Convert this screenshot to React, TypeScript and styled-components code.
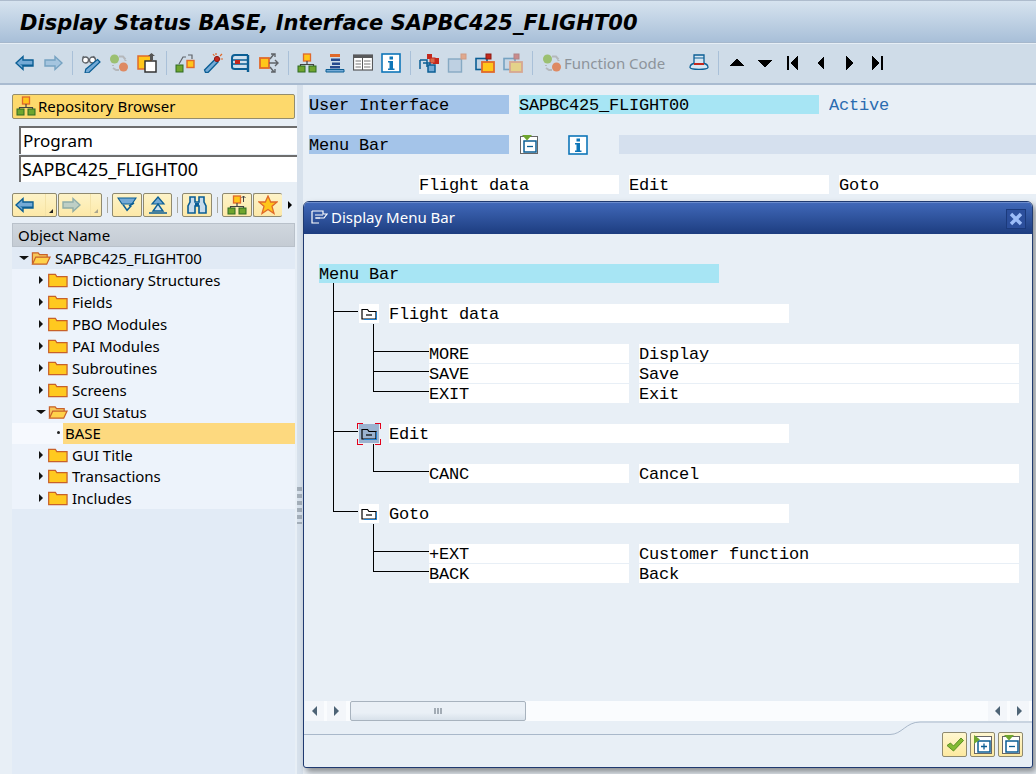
import React from 'react'
import styled, { createGlobalStyle } from 'styled-components'

const GlobalStyle = createGlobalStyle`
    html, body {
        margin: 0;
        padding: 0;
        background: #e8eff6;
    }
    * { box-sizing: border-box; }
`

const UI = `"Noto Sans", "DejaVu Sans", sans-serif`
const MONO = `"Liberation Mono", "DejaVu Sans Mono", monospace`

/* ---- icons ---- */
const BLUE = '#0b5e94'
const SKY = '#74aad6'
const GREEN = '#6fa52e'
const ORANGE = '#e0692a'
const YELLOW = '#ffc61a'
const RED = '#c4281c'
const GREY = '#5f6368'

type IconProps = { children: React.ReactNode; size?: number; box?: number; faded?: boolean }
const Svg = ({ children, size = 20, box = 20, faded }: IconProps) => (
    <svg width={size} height={size} viewBox={`0 0 ${box} ${box}`} style={faded ? { opacity: 0.45 } : undefined}>
        {children}
    </svg>
)

const ArrowLeft = ({ faded, size }: { faded?: boolean; size?: number }) => (
    <Svg faded={faded} size={size}>
        <path d="M1 10 8 3.5V7h10v6H8v3.5z" fill={SKY} stroke={BLUE} strokeWidth="1.4" />
        <path d="M8 13h10v-1.600H5z" fill={BLUE} />
    </Svg>
)
const ArrowRight = ({ faded, size }: { faded?: boolean; size?: number }) => (
    <Svg faded={faded} size={size}>
        <path d="M19 10 12 3.5V7H2v6h10v3.5z" fill={SKY} stroke={BLUE} strokeWidth="1.4" />
    </Svg>
)
const GlassesPencil = () => (
    <Svg>
        <circle cx="4.500" cy="7" r="3" fill="#fff" stroke={GREY} strokeWidth="1.300" />
        <circle cx="11.500" cy="7" r="3" fill="#fff" stroke={GREY} strokeWidth="1.300" />
        <path d="M7.500 6.500h1M2.500 3l-1 2.500M12.500 3l1.500 2.500" stroke={GREY} strokeWidth="1.100" fill="none" />
        <path d="m16.500 6.500 2.500 2.500L8 19.500 4 20l.8-3.800z" fill={SKY} stroke={BLUE} strokeWidth="1.200" />
    </Svg>
)
const Cycle = ({ faded }: { faded?: boolean }) => (
    <Svg faded={faded}>
        <path d="M10 3.500h4l2.500 3M10 17h-3l-3-2" stroke="#b5b8bb" strokeWidth="2" fill="none" />
        <path d="M4 13v-1M16.500 7v1" stroke="#b5b8bb" strokeWidth="2" />
        <circle cx="5.500" cy="6" r="4.500" fill="#9cc071" />
        <circle cx="14.500" cy="14" r="4.500" fill="#de8a63" />
    </Svg>
)
const CopyDoc = () => (
    <Svg>
        <rect x="1" y="3" width="13" height="13" fill={YELLOW} stroke={ORANGE} strokeWidth="1.500" />
        <path d="M8 8h11v11H8z" fill="#fff" stroke="#333" strokeWidth="1.500" />
        <path d="M13 1h3v6h-3zM14.500 0l3.500 3h-7z" fill="#555" />
    </Svg>
)
const ActivateNodes = () => (
    <Svg>
        <rect x="1" y="12" width="7" height="7" fill={GREEN} stroke="#2f6b22" />
        <rect x="12" y="7.500" width="7" height="7" fill={YELLOW} stroke={ORANGE} strokeWidth="1.400" />
        <path d="M4 11 8 4h3M13 2h4v4" stroke={GREY} strokeWidth="1.200" fill="none" />
    </Svg>
)
const Wand = () => (
    <Svg>
        <path d="M12 6.500 15 9 5 19.500H2.500L1.500 17z" fill={SKY} stroke={BLUE} strokeWidth="1.300" />
        <circle cx="14" cy="6" r="2.600" fill={RED} stroke="#8d1a12" />
        <path d="M13 0v2M19 1l-2 2M20 6h-2.500M10 1l1.500 2" stroke={ORANGE} strokeWidth="1.200" />
    </Svg>
)
const Clamp = () => (
    <Svg>
        <path d="M17 2H4C2 2 1 3 1 5v9c0 1.500 1 2 3 2h13" fill="#cfe0ee" stroke={BLUE} strokeWidth="2" />
        <path d="M1 7h16M1 11h16" stroke={BLUE} strokeWidth="1.300" />
        <rect x="4" y="7" width="5" height="4" fill={RED} />
        <path d="M17 2v17" stroke={BLUE} strokeWidth="2.400" />
    </Svg>
)
const Branch = () => (
    <Svg>
        <rect x="1" y="5" width="9" height="10" fill={YELLOW} stroke={ORANGE} strokeWidth="1.800" />
        <path d="M10 10h9M16 7l3 3-3 3M11 6l4-5M12 1h4v3M11 14l4 5M12 19h4v-3" stroke={GREY} strokeWidth="1.400" fill="none" />
    </Svg>
)
const Hierarchy = ({ size, spark }: { size?: number; spark?: boolean }) => (
    <Svg size={size}>
        <rect x="6.500" y="1" width="7" height="7" fill={YELLOW} stroke={ORANGE} strokeWidth="1.300" />
        <path d="M10 8v3.500M3.500 14v-2.500h13V14" stroke="#444" strokeWidth="1.200" fill="none" />
        <rect x="1" y="13" width="7" height="6" fill={GREEN} stroke="#2f6b22" />
        <rect x="12" y="13" width="7" height="6" fill={GREEN} stroke="#2f6b22" />
        {spark && <path d="M16.500 1v6M14.500 3l2-2 2 2" stroke="#444" fill="none" />}
    </Svg>
)
const Stack = () => (
    <Svg>
        <rect x="5" y="1" width="10" height="3" fill={ORANGE} />
        <rect x="6" y="5.500" width="9" height="2.500" fill="#274a8e" />
        <rect x="7" y="9.500" width="8" height="2.500" fill="#274a8e" />
        <rect x="5" y="13" width="10" height="2.500" fill="#274a8e" />
        <path d="M1 19h18v-2.500H1z" fill={SKY} stroke={BLUE} />
    </Svg>
)
const TableView = () => (
    <Svg>
        <rect x="0.500" y="2" width="19" height="15" fill="#fff" stroke="#58595b" strokeWidth="1.200" />
        <rect x="0.500" y="2" width="19" height="3" fill="#58595b" />
        <path d="M2.500 8H8M2.500 11H8M2.500 14H8M11 8h6.500M11 11h6.500M11 14h6.500" stroke="#777" strokeWidth="1.200" />
        <path d="M9.500 5v12" stroke="#58595b" />
    </Svg>
)
const Info = ({ size }: { size?: number }) => (
    <Svg size={size}>
        <rect x="1" y="1" width="18" height="18" fill="#fff" stroke="#0e76b8" strokeWidth="1.600" />
        <rect x="8.500" y="3.500" width="3.500" height="3" fill="#0e76b8" />
        <path d="M7 8h5v7.500h1.500V17H7v-1.500h1.500V9.500H7z" fill="#0e76b8" />
    </Svg>
)
const Windows = () => (
    <Svg>
        <rect x="8" y="1" width="5" height="5" fill={RED} />
        <rect x="14" y="5" width="6" height="6" fill={RED} />
        <rect x="11" y="5" width="5" height="5" fill="#d86a4a" stroke={RED} />
        <path d="M1 7h7v7M1 7v9" stroke={BLUE} strokeWidth="1.500" fill="none" />
        <path d="M4 10h7v3" stroke={BLUE} strokeWidth="1.500" fill="none" />
        <rect x="9" y="12" width="7" height="7" fill={SKY} stroke={BLUE} strokeWidth="1.500" />
    </Svg>
)
const NewWindowFaded = () => (
    <Svg>
        <rect x="1.500" y="6" width="13" height="13" fill="#bed0e2" stroke="#86a9c3" strokeWidth="1.400" />
        <rect x="14" y="1" width="5" height="5" fill="#e0a98e" stroke="#d09b84" />
    </Svg>
)
const FolderWindow = ({ faded }: { faded?: boolean }) => (
    <Svg faded={faded}>
        <rect x="1" y="5.500" width="11" height="11" fill="#c2d3e3" stroke={BLUE} strokeWidth="1.600" />
        <rect x="11" y="1" width="5" height="5" fill={RED} stroke="#8d1a12" />
        <rect x="7" y="9" width="12" height="10" fill={YELLOW} stroke={ORANGE} strokeWidth="1.800" />
    </Svg>
)
const Hat = () => (
    <Svg>
        <path d="M5 2h10v9H5z" fill="#d6e6f3" stroke={BLUE} strokeWidth="1.300" />
        <path d="M5 5h10" stroke={BLUE} />
        <path d="M5 10.500C2 11 1 12.500 1 14.500c1 2.500 17 2.500 18 0 0-2-1-3.500-4-4" fill="#d6e6f3" stroke={BLUE} strokeWidth="1.300" />
        <rect x="5" y="10" width="10" height="2" fill={RED} />
    </Svg>
)
const Solid = ({ d, w = 16 }: { d: string; w?: number }) => (
    <svg width={w} height="16" viewBox="0 0 16 16" shapeRendering="crispEdges">
        <path d={d} fill="#000" />
    </svg>
)
const Binoculars = () => (
    <Svg>
        <path d="M3 2h5v5h4V2h5v5l2 4v7h-7v-7H8v7H1v-7l2-4z" fill="#c8dcec" stroke={BLUE} strokeWidth="1.600" />
        <path d="M8 8h4v3H8z" fill={BLUE} />
    </Svg>
)
const CollapseAll = () => (
    <Svg>
        <path d="M1 3h18l-4 6H5z" fill={SKY} stroke={BLUE} strokeWidth="1.200" />
        <path d="M5 9.500l5 7 5-5.500-1.500-.5-3.500 3.500-3-4.500z" fill={BLUE} />
        <path d="M12 11l5-3" stroke={BLUE} strokeWidth="1.500" />
    </Svg>
)
const ExpandAll = () => (
    <Svg>
        <path d="M10 2 16 9H4z" fill={SKY} stroke={BLUE} strokeWidth="1.200" />
        <path d="M10 9l5 7H5zM1 18h18" fill="#cfe2f0" stroke={BLUE} strokeWidth="1.400" />
    </Svg>
)
const Star = () => (
    <Svg>
        <path d="M10 1l2.700 6H19l-5 4.300 2 7.200-6-4-6 4 2-7.200L1 7h6.300z" fill={YELLOW} stroke={ORANGE} strokeWidth="1.300" />
    </Svg>
)
const Check = () => (
    <Svg>
        <path d="M2 10.500 5.500 8l3 3L16 3l2.500 2.500L8.500 16z" fill="#83bb32" stroke="#5a8f22" />
    </Svg>
)
const Expand = ({ plus }: { plus?: boolean }) => (
    <Svg>
        <rect x="1.500" y="1.500" width="17" height="17" fill="#fff" stroke="#666" />
        <rect x="5" y="6" width="12" height="11" fill="#fff" stroke={BLUE} strokeWidth="1.500" />
        <path d={plus ? 'M8 11.500h6M11 8.500v6' : 'M8 11.500h6'} stroke={BLUE} strokeWidth="1.300" />
        {plus
            ? <path d="M1 0v9l6-4.500z" fill={GREEN} />
            : <path d="M3 0h10L8 5.500z" fill={GREEN} />}
    </Svg>
)
const Folder = ({ open }: { open?: boolean }) => (
    <svg width="20" height="16" viewBox="0 0 21 16">
        {open ? (
            <>
                <path d="M1.500 14V2.500h6l1.500 2h8v2.500" fill="#f7c95a" stroke="#c8612a" strokeWidth="1.300" />
                <path d="M1.500 14.500 5 7h15l-3.500 7.500z" fill="#ffd24a" stroke="#c8612a" strokeWidth="1.300" />
            </>
        ) : (
            <path d="M.7 15V2h7l1.500 2.500h10.800V15z" fill="#ffc91f" stroke="#c8612a" strokeWidth="1.300" />
        )}
    </svg>
)
const SmallFolder = () => (
    <svg width="16" height="12" viewBox="0 0 16 12">
        <path d="M1 11V1.500h5.500L8 3.500h7V11z" fill="none" stroke="#000" strokeWidth="1.200" />
        <path d="M5 7h6" stroke="#000" strokeWidth="1.200" />
        <path d="M15.500 4v7.500H3" stroke="#1f7fd0" fill="none" />
    </svg>
)
const DialogGlyph = () => (
    <svg width="17" height="14" viewBox="0 0 17 14">
        <path d="M1 1h11v3l4 0-3 4H5M1 1v12h7" fill="none" stroke="#fff" strokeWidth="1.200" />
        <path d="M4 5h8M4 8h5" stroke="#fff" />
    </svg>
)

/* ---- page frame ---- */
const Page = styled.div`
    width: 1036px;
    height: 774px;
    position: relative;
    overflow: hidden;
    display: flex;
    flex-direction: column;
    background: #e8eff6;
    font-family: ${UI};
    color: #000;
`

const TitleBar = styled.header`
    height: 43px;
    flex: none;
    padding: 8px 0 0 20px;
    background: linear-gradient(#d6e3ef, #a8bfd8);
    border-top: 1px solid #aebccd;
    border-bottom: 1px solid #a6b8cc;
    font-family: "DejaVu Sans", sans-serif;
    font-size: 21px;
    line-height: 28px;
    font-weight: bold;
    font-style: italic;
    letter-spacing: 0.03px;
    white-space: nowrap;
`

const Toolbar = styled.nav`
    height: 42px;
    flex: none;
    display: flex;
    align-items: center;
    padding: 0 0 1px 11px;
    background: #cfdce8;
    border-top: 1px solid #e6eef5;
    border-bottom: 2px solid #a9bbd0;
`

const ToolIcon = styled.span`
    width: 28px;
    height: 24px;
    flex: none;
    display: flex;
    align-items: center;
    justify-content: center;
`

const ToolSep = styled.span`
    width: 10px;
    height: 24px;
    flex: none;
    display: flex;
    justify-content: center;
    &::before {
        content: '';
        width: 1px;
        background: #a9c0d8;
    }
`

const FunctionButton = styled.span`
    width: 148px;
    flex: none;
    display: flex;
    align-items: center;
    gap: 2px;
    padding-left: 5px;
    font-size: 15px;
    color: #8d949b;
    white-space: nowrap;
`

const Main = styled.div`
    flex: 1;
    display: flex;
    min-height: 0;
`

/* ---- left panel ---- */
const Side = styled.aside`
    width: 297px;
    flex: none;
    display: flex;
    flex-direction: column;
    padding: 9px 2px 0 12px;
    overflow: hidden;
`

const RepoButton = styled.div`
    height: 25px;
    display: flex;
    align-items: center;
    gap: 2px;
    padding: 0 0 1px 3px;
    background: #fdd96c;
    border: 1px solid #948d6c;
    border-radius: 2px;
    font-size: 15px;
`

const SideField = styled.div<{ $gap: number; $height: number; $size: number; $pad: number }>`
    height: ${(p) => p.$height}px;
    margin: ${(p) => p.$gap}px -2px 0 7px;
    padding: 0 0 2px ${(p) => p.$pad}px;
    display: flex;
    align-items: center;
    background: #fff;
    border-top: 2px solid #6d6d6d;
    border-left: 2px solid #6d6d6d;
    font-size: ${(p) => p.$size}px;
`

const SideTools = styled.div`
    height: 24px;
    margin-top: 11px;
    display: flex;
    align-items: stretch;
    white-space: nowrap;
`

const SideBtn = styled.span<{ $w: number; $open?: boolean }>`
    width: ${(p) => p.$w}px;
    flex: none;
    margin-right: 1px;
    position: relative;
    display: flex;
    align-items: center;
    justify-content: ${(p) => (p.$w > 35 ? 'flex-start' : 'center')};
    padding-left: ${(p) => (p.$w > 35 ? '2px' : '0')};
    background: linear-gradient(#fdf3c8, #fde9a8);
    border: 1px solid #8f8a70;
    border-right-width: ${(p) => (p.$open ? 0 : 1)}px;
    border-radius: 2px;
`

const SideDrop = styled.i<{ $dim?: boolean }>`
    position: absolute;
    right: 3px;
    bottom: 3px;
    width: 0;
    height: 0;
    border-left: 4px solid transparent;
    border-bottom: 4px solid ${(p) => (p.$dim ? '#a9a58f' : '#222')};
`

const SideSplit = styled.i`
    position: absolute;
    right: 10px;
    top: 0;
    bottom: 0;
    width: 1px;
    background: #f4e3a8;
`

const SideSep = styled.span`
    width: 9px;
    flex: none;
    display: flex;
    justify-content: center;
    padding: 4px 0;
    &::before {
        content: '';
        width: 1px;
        background: #a9a9a0;
    }
`

const MoreArrow = styled.span`
    margin-left: 5px;
    align-self: center;
    width: 0;
    height: 0;
    border-left: 4px solid #000;
    border-top: 4px solid transparent;
    border-bottom: 4px solid transparent;
`

const TreeHead = styled.div`
    height: 24px;
    margin-top: 6px;
    padding: 0 0 1px 5px;
    display: flex;
    align-items: center;
    background: linear-gradient(#d0d7de, #c5ccd4);
    border: 1px solid #b9c1ca;
    font-size: 15px;
`

const Tree = styled.div`
    flex: 1;
    background: #e2ebf6;
`

const TreeItem = styled.div<{ $depth: number; $root?: boolean; $picked?: boolean; $short?: boolean }>`
    height: ${(p) => (p.$picked || p.$short ? 21 : 22)}px;
    display: flex;
    align-items: center;
    gap: 4px;
    padding-left: ${(p) => 7 + p.$depth * 17}px;
    background: ${(p) => (p.$root ? '#e1eaf5' : p.$picked ? '#f6f9fe' : '#edf3fb')};
    font-size: 15px;
    white-space: nowrap;
`

const TreeArrow = styled.span<{ $down?: boolean }>`
    width: 9px;
    height: 9px;
    flex: none;
    margin-right: -1px;
    display: flex;
    align-items: center;
    justify-content: center;
    &::before {
        content: '';
        width: 0;
        height: 0;
        ${(p) =>
            p.$down
                ? `border-top: 4px solid #111; border-left: 5px solid transparent; border-right: 5px solid transparent;`
                : `border-left: 4px solid #111; border-top: 4px solid transparent; border-bottom: 4px solid transparent;`}
    }
`

const PickedLabel = styled.span`
    flex: 1;
    align-self: stretch;
    margin-left: -1px;
    padding: 0 0 2px 2px;
    display: flex;
    align-items: center;
    background: #fdd97f;
`

const Bullet = styled.span`
    width: 3px;
    height: 3px;
    margin: 0 0 2px 21px;
    background: #222;
    border-radius: 50%;
`

const Sash = styled.div`
    width: 6px;
    flex: none;
    display: flex;
    align-items: center;
    background: #d7e1ec;
    padding-top: 152px;
    &::before {
        content: '';
        width: 5px;
        height: 37px;
        background: repeating-linear-gradient(#a3aeb9 0 4px, transparent 4px 7px);
    }
`

/* ---- right screen ---- */
const Screen = styled.section`
    flex: 1;
    padding: 10px 0 0 6px;
    font-family: ${MONO};
    overflow: hidden;
`

const ScreenRow = styled.div<{ $indent?: number }>`
    height: 19px;
    margin-bottom: 21px;
    padding-left: ${(p) => p.$indent ?? 0}px;
    display: flex;
    align-items: stretch;
`

const Cell = styled.div<{ $w?: number; $bg?: string; $gap?: number; $color?: string }>`
    ${(p) => (p.$w ? `width: ${p.$w}px; flex: none;` : 'flex: 1;')}
    margin-left: ${(p) => p.$gap ?? 0}px;
    background: ${(p) => p.$bg ?? 'transparent'};
    color: ${(p) => p.$color ?? '#000'};
    font-size: 17px;
    line-height: 21px;
    letter-spacing: -0.2px;
    white-space: nowrap;
    overflow: hidden;
`

const CellIcon = styled.span<{ $w: number }>`
    width: ${(p) => p.$w}px;
    flex: none;
    display: flex;
    align-items: center;
    justify-content: center;
`

/* ---- dialog ---- */
const Dialog = styled.div`
    position: absolute;
    left: 303px;
    top: 201px;
    width: 730px;
    height: 567px;
    display: flex;
    flex-direction: column;
    background: #e8eff6;
    border: 1px solid #1f3a70;
    border-radius: 6px 6px 3px 3px;
    box-shadow: 3px 4px 6px rgba(60, 60, 60, 0.55);
    overflow: hidden;
    font-family: ${MONO};
`

const DialogTitle = styled.div`
    height: 32px;
    flex: none;
    display: flex;
    align-items: center;
    gap: 3px;
    padding: 0 0 3px 7px;
    background: linear-gradient(#4068b8, #1d3d80);
    border-top: 1px solid #6c8ccc;
    color: #fff;
    font-family: ${UI};
    font-size: 15px;
`

const CloseBtn = styled.span`
    margin: 3px 6px 0 auto;
    width: 20px;
    height: 20px;
    display: flex;
    align-items: center;
    justify-content: center;
    background: #2c4f9c;
    border: 1px solid #1b3a7c;
`

const MenuTree = styled.div`
    position: relative;
    flex: 1;
    padding: 30px 0 0 15px;
`

const TreeLines = styled.svg`
    position: absolute;
    left: 0;
    top: 0;
    width: 100%;
    height: 100%;
    pointer-events: none;
`

const DRow = styled.div<{ $top?: number; $indent: number }>`
    height: 20px;
    margin-top: ${(p) => p.$top ?? 0}px;
    padding-left: ${(p) => p.$indent}px;
    padding-bottom: 1px;
    display: flex;
    align-items: stretch;
`

const FolderBox = styled.span<{ $picked?: boolean }>`
    position: relative;
    width: 20px;
    flex: none;
    margin-right: 10px;
    display: flex;
    align-items: center;
    justify-content: center;
    background: ${(p) => (p.$picked ? '#9bb3d0' : '#fff')};
    ${(p) =>
        p.$picked &&
        `&::after {
            content: '';
            position: absolute;
            inset: -1px -2px -2px -2px;
            background:
                linear-gradient(#e2001a,#e2001a) 0 0/6px 1px no-repeat,
                linear-gradient(#e2001a,#e2001a) 0 0/1px 6px no-repeat,
                linear-gradient(#e2001a,#e2001a) 100% 0/6px 1px no-repeat,
                linear-gradient(#e2001a,#e2001a) 100% 0/1px 6px no-repeat,
                linear-gradient(#e2001a,#e2001a) 0 100%/6px 1px no-repeat,
                linear-gradient(#e2001a,#e2001a) 0 100%/1px 6px no-repeat,
                linear-gradient(#e2001a,#e2001a) 100% 100%/6px 1px no-repeat,
                linear-gradient(#e2001a,#e2001a) 100% 100%/1px 6px no-repeat;
        }`}
`

const ScrollBar = styled.div`
    height: 20px;
    flex: none;
    margin-left: 1px;
    display: flex;
    align-items: stretch;
    background: #fafcfe;
`

const ScrollArrow = styled.span<{ $dir: 'l' | 'r'; $push?: boolean }>`
    width: 19px;
    margin-right: 3px;
    ${(p) => p.$push && 'margin-left: auto;'}
    display: flex;
    align-items: center;
    justify-content: center;
    background: #f3f6fa;
    &::before {
        content: '';
        width: 0;
        height: 0;
        border-top: 5px solid transparent;
        border-bottom: 5px solid transparent;
        ${(p) => (p.$dir === 'l' ? 'border-right: 5px solid #4d6375;' : 'border-left: 5px solid #4d6375;')}
    }
`

const ScrollThumb = styled.span`
    width: 176px;
    margin-left: 1px;
    display: flex;
    align-items: center;
    justify-content: center;
    background: linear-gradient(#eaf0f6 60%, #d8e1ea);
    border: 1px solid #a8b3be;
    border-radius: 2px;
    color: #a3acb5;
    &::before {
        content: '';
        width: 8px;
        height: 6px;
        background: repeating-linear-gradient(90deg, #a3acb5 0 2px, transparent 2px 3px);
    }
`

const Footer = styled.div`
    position: relative;
    height: 46px;
    flex: none;
    padding: 11px 9px 0 0;
    display: flex;
    justify-content: flex-end;
    gap: 3px;
`

const FooterLine = styled.svg`
    position: absolute;
    left: 0;
    top: 0;
    width: 728px;
    height: 15px;
`

const FooterBtn = styled.span`
    width: 25px;
    height: 25px;
    display: flex;
    align-items: center;
    justify-content: center;
    background: linear-gradient(#fff7d0, #fde9a0);
    border: 1px solid #8f8a70;
    border-radius: 2px;
`

const rows = ['Dictionary Structures', 'Fields', 'PBO Modules', 'PAI Modules', 'Subroutines', 'Screens']
const rowsAfter = ['GUI Title', 'Transactions', 'Includes']

const App = () => (
    <Page>
        <GlobalStyle />
        <TitleBar>Display Status BASE, Interface SAPBC425_FLIGHT00</TitleBar>
        <Toolbar>
            <ToolIcon><ArrowLeft /></ToolIcon>
            <ToolIcon><ArrowRight faded /></ToolIcon>
            <ToolSep />
            <ToolIcon><GlassesPencil /></ToolIcon>
            <ToolIcon><Cycle /></ToolIcon>
            <ToolIcon><CopyDoc /></ToolIcon>
            <ToolSep />
            <ToolIcon><ActivateNodes /></ToolIcon>
            <ToolIcon><Wand /></ToolIcon>
            <ToolIcon><Clamp /></ToolIcon>
            <ToolIcon><Branch /></ToolIcon>
            <ToolSep />
            <ToolIcon><Hierarchy /></ToolIcon>
            <ToolIcon><Stack /></ToolIcon>
            <ToolIcon><TableView /></ToolIcon>
            <ToolIcon><Info /></ToolIcon>
            <ToolSep />
            <ToolIcon><Windows /></ToolIcon>
            <ToolIcon><NewWindowFaded /></ToolIcon>
            <ToolIcon><FolderWindow /></ToolIcon>
            <ToolIcon><FolderWindow faded /></ToolIcon>
            <ToolSep />
            <FunctionButton><Cycle />Function Code</FunctionButton>
            <ToolIcon><Hat /></ToolIcon>
            <ToolSep />
            <ToolIcon><Solid d="M8 3 15 11H1z" /></ToolIcon>
            <ToolIcon><Solid d="M1 5h14L8 13z" /></ToolIcon>
            <ToolIcon><Solid d="M2 1h2v14H2zM13 1v14L5 8z" /></ToolIcon>
            <ToolIcon><Solid d="M11 1v14L4 8z" /></ToolIcon>
            <ToolIcon><Solid d="M5 1v14l7-7z" /></ToolIcon>
            <ToolIcon><Solid d="M3 1v14l8-7zM12 1h2v14h-2z" /></ToolIcon>
        </Toolbar>
        <Main>
            <Side>
                <RepoButton><Hierarchy />Repository Browser</RepoButton>
                <SideField $gap={7} $height={28} $size={17} $pad={2}>Program</SideField>
                <SideField $gap={1} $height={27} $size={18} $pad={1}>SAPBC425_FLIGHT00</SideField>
                <SideTools>
                    <SideBtn $w={45}><ArrowLeft /><SideSplit /><SideDrop /></SideBtn>
                    <SideBtn $w={44}><ArrowRight faded /><SideSplit /><SideDrop $dim /></SideBtn>
                    <SideSep />
                    <SideBtn $w={30}><CollapseAll /></SideBtn>
                    <SideBtn $w={29}><ExpandAll /></SideBtn>
                    <SideSep />
                    <SideBtn $w={30}><Binoculars /></SideBtn>
                    <SideSep />
                    <SideBtn $w={30}><Hierarchy spark /></SideBtn>
                    <SideBtn $w={29} $open><Star /></SideBtn>
                    <MoreArrow />
                </SideTools>
                <TreeHead>Object Name</TreeHead>
                <Tree>
                    <TreeItem $depth={0} $root>
                        <TreeArrow $down /><Folder open />SAPBC425_FLIGHT00
                    </TreeItem>
                    {rows.map((r) => (
                        <TreeItem key={r} $depth={1}><TreeArrow /><Folder />{r}</TreeItem>
                    ))}
                    <TreeItem $depth={1}><TreeArrow $down /><Folder open />GUI Status</TreeItem>
                    <TreeItem $depth={1} $picked>
                        <Bullet /><PickedLabel>BASE</PickedLabel>
                    </TreeItem>
                    {rowsAfter.map((r, i) => (
                        <TreeItem key={r} $depth={1} $short={i === 0}><TreeArrow /><Folder />{r}</TreeItem>
                    ))}
                </Tree>
            </Side>
            <Sash />
            <Screen>
                <ScreenRow>
                    <Cell $w={200} $bg="#a4c4e9">User Interface</Cell>
                    <Cell $w={300} $gap={10} $bg="#a7e5f4">SAPBC425_FLIGHT00</Cell>
                    <Cell $w={100} $gap={10} $color="#2b6cb0">Active</Cell>
                </ScreenRow>
                <ScreenRow>
                    <Cell $w={200} $bg="#a4c4e9">Menu Bar</Cell>
                    <CellIcon $w={40}><Expand /></CellIcon>
                    <CellIcon $w={58}><Info /></CellIcon>
                    <Cell $gap={12} $bg="#d5e0ee" />
                </ScreenRow>
                <ScreenRow $indent={110}>
                    <Cell $w={200} $bg="#fff">Flight data</Cell>
                    <Cell $w={200} $gap={10} $bg="#fff">Edit</Cell>
                    <Cell $gap={10} $bg="#fff">Goto</Cell>
                </ScreenRow>
            </Screen>
        </Main>
        <Dialog>
            <DialogTitle>
                <DialogGlyph />Display Menu Bar
                <CloseBtn>
                    <svg width="14" height="14" viewBox="0 0 14 14">
                        <path d="M2 2l10 10M12 2 2 12" stroke="#9dbdf8" strokeWidth="3.400" />
                    </svg>
                </CloseBtn>
            </DialogTitle>
            <MenuTree>
                <TreeLines>
                    <path
                        d="M29.500 49V278M29.500 77.500H54M29.500 197.500H54M29.500 277.500H54M69.500 90V158M69.500 117.500H125M69.500 137.500H125M69.500 157.500H125M69.500 210V238M69.500 237.500H125M69.500 290V338M69.500 317.500H125M69.500 337.500H125"
                        stroke="#000"
                        strokeWidth="1"
                        fill="none"
                        shapeRendering="crispEdges"
                    />
                </TreeLines>
                <DRow $indent={0}>
                    <Cell $w={400} $bg="#a7e5f4">Menu Bar</Cell>
                </DRow>
                <DRow $top={20} $indent={40}>
                    <FolderBox><SmallFolder /></FolderBox>
                    <Cell $w={400} $bg="#fff">Flight data</Cell>
                </DRow>
                <DRow $top={20} $indent={110}>
                    <Cell $w={200} $bg="#fff">MORE</Cell>
                    <Cell $w={380} $gap={10} $bg="#fff">Display</Cell>
                </DRow>
                <DRow $indent={110}>
                    <Cell $w={200} $bg="#fff">SAVE</Cell>
                    <Cell $w={380} $gap={10} $bg="#fff">Save</Cell>
                </DRow>
                <DRow $indent={110}>
                    <Cell $w={200} $bg="#fff">EXIT</Cell>
                    <Cell $w={380} $gap={10} $bg="#fff">Exit</Cell>
                </DRow>
                <DRow $top={20} $indent={40}>
                    <FolderBox $picked><SmallFolder /></FolderBox>
                    <Cell $w={400} $bg="#fff">Edit</Cell>
                </DRow>
                <DRow $top={20} $indent={110}>
                    <Cell $w={200} $bg="#fff">CANC</Cell>
                    <Cell $w={380} $gap={10} $bg="#fff">Cancel</Cell>
                </DRow>
                <DRow $top={20} $indent={40}>
                    <FolderBox><SmallFolder /></FolderBox>
                    <Cell $w={400} $bg="#fff">Goto</Cell>
                </DRow>
                <DRow $top={20} $indent={110}>
                    <Cell $w={200} $bg="#fff">+EXT</Cell>
                    <Cell $w={380} $gap={10} $bg="#fff">Customer function</Cell>
                </DRow>
                <DRow $indent={110}>
                    <Cell $w={200} $bg="#fff">BACK</Cell>
                    <Cell $w={380} $gap={10} $bg="#fff">Back</Cell>
                </DRow>
            </MenuTree>
            <ScrollBar>
                <ScrollArrow $dir="l" />
                <ScrollArrow $dir="r" />
                <ScrollThumb />
                <ScrollArrow $dir="l" $push />
                <ScrollArrow $dir="r" />
            </ScrollBar>
            <Footer>
                <FooterLine viewBox="0 0 728 15">
                    <path d="M0 13.500H586c12 0 16-12.500 30-12.500H728" stroke="#a9b8ca" fill="none" />
                </FooterLine>
                <FooterBtn><Check /></FooterBtn>
                <FooterBtn><Expand plus /></FooterBtn>
                <FooterBtn><Expand /></FooterBtn>
            </Footer>
        </Dialog>
    </Page>
)

export default App
